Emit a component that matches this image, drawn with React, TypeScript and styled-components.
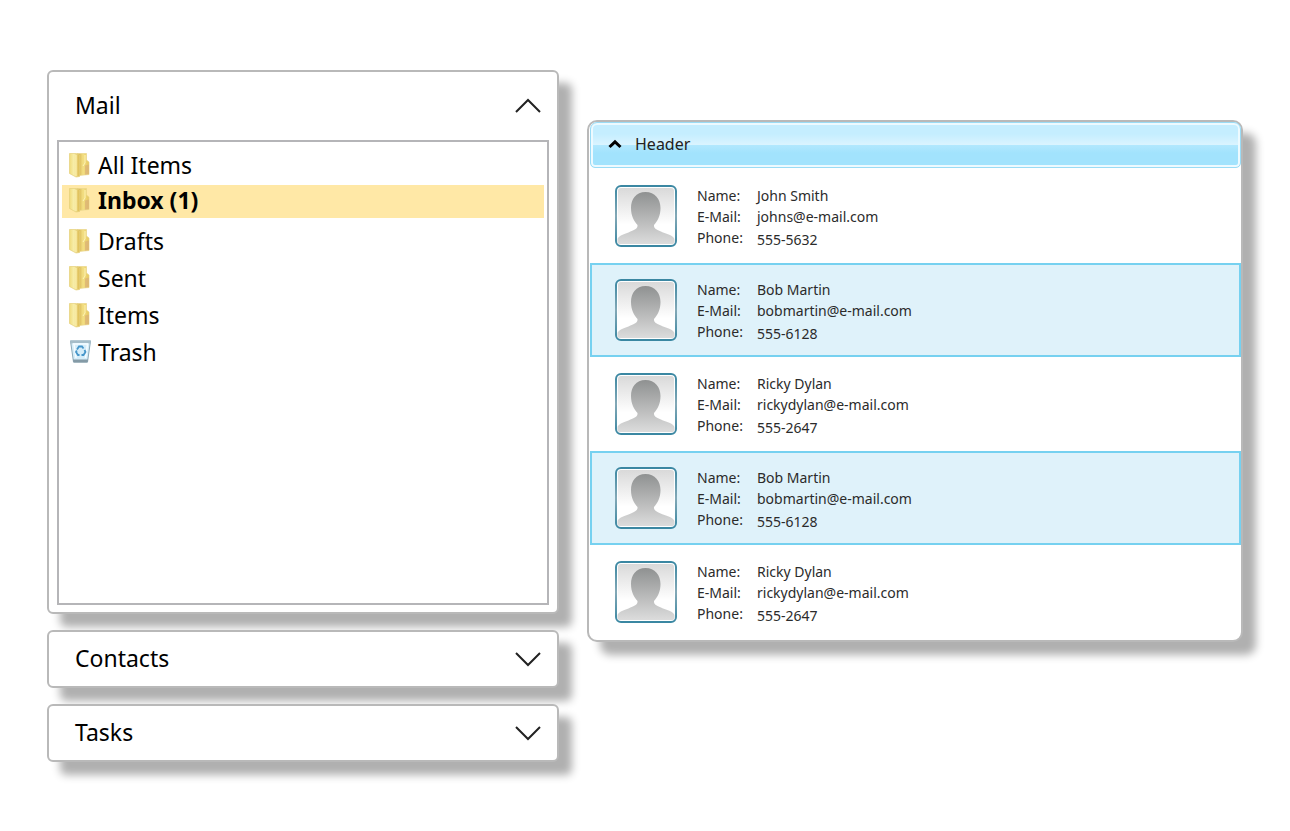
import React, { useState } from "react";
import styled, { createGlobalStyle } from "styled-components";

const GlobalStyle = createGlobalStyle`
  * { box-sizing: border-box; }
  body {
    margin: 0;
    background: #fff;
    color: #000;
    font-family: "Noto Sans", "Open Sans", sans-serif;
  }
  button { font: inherit; color: inherit; cursor: pointer; }
  ul, dl, dd { margin: 0; padding: 0; list-style: none; }
`;

const Page = styled.main`
  display: grid;
  grid-template-columns: 512fr 656fr;
  gap: 28px;
  align-items: start;
  padding: 70px 47px;
`;

const Accordion = styled.div`
  display: flex;
  flex-direction: column;
  gap: 16px;
`;

const Panel = styled.section`
  border: 2px solid #b9b9b9;
  border-radius: 6px;
  background: #fff;
  box-shadow: 13px 13px 8px #b0b0b0;
`;

const PanelButton = styled.button<{ $open: boolean }>`
  display: flex;
  align-items: center;
  justify-content: space-between;
  width: 100%;
  height: ${(p) => (p.$open ? 68 : 54)}px;
  padding: 0 16px 2px 26px;
  border: 0;
  background: none;
  font-size: 23px;
  line-height: 32px;

  svg { margin-top: 2px; }
`;

const FolderBox = styled.ul`
  height: 465px;
  margin: 0 8px 7px;
  padding: 4px 3px;
  border: 2px solid #b5b5b8;
`;

const FolderItem = styled.li<{ $active?: boolean }>`
  margin: ${(p) => (p.$active ? "2px 0 4px" : "0")};
  background: ${(p) => (p.$active ? "#ffe8a6" : "transparent")};
`;

const FolderLink = styled.a<{ $active?: boolean }>`
  display: flex;
  align-items: center;
  gap: 6px;
  height: ${(p) => (p.$active ? 33 : 37)}px;
  padding: ${(p) => (p.$active ? "0 6px 3px" : "0 6px")};
  color: #000;
  font-size: 23px;
  font-weight: ${(p) => (p.$active ? 700 : 400)};
  line-height: 32px;
  text-decoration: none;
`;

const ContactPanel = styled.section`
  margin-top: 50px;
  padding: 0 0 1px 1px;
  border: 2px solid #b9b9b9;
  border-radius: 10px;
  background: #fff;
  box-shadow: 13px 13px 8px #b0b0b0;
`;

const ContactHeader = styled.button`
  display: flex;
  align-items: center;
  gap: 12px;
  width: 100%;
  height: 46px;
  margin-bottom: 1px;
  padding: 0 16px 2px;
  border: 1px solid #9adcf6;
  border-radius: 7px 7px 5px 5px;
  background: linear-gradient(#c5eeff 0%, #c5eeff 25%, #daf4ff 49%, #b2e8fe 50%, #a2e3fd 68%, #a2e3fd 100%);
  box-shadow: inset 0 0 0 2px #edfaff;
  color: #222;
  font-size: 16px;
  line-height: 24px;
`;

const ContactCard = styled.li<{ $selected: boolean }>`
  display: flex;
  align-items: center;
  gap: 20px;
  height: 94px;
  padding: 0 23px;
  border: 2px solid ${(p) => (p.$selected ? "#76d1f0" : "transparent")};
  background: ${(p) => (p.$selected ? "#dff2fa" : "transparent")};
`;

const Details = styled.dl`
  display: grid;
  grid-template-columns: 46px auto;
  column-gap: 14px;
  padding-top: 3px;
  color: #2b2b2b;
  font-size: 14px;
  line-height: 21px;
`;

const Term = styled.dt`
  white-space: nowrap;
`;

const Value = styled.dd`
  white-space: nowrap;
`;

const PhoneValue = styled(Value)`
  padding-top: 2px;
`;

function Chevron({ up }: { up?: boolean }) {
  return (
    <svg width="26" height="16" viewBox="0 0 26 16" fill="none" stroke="#222" strokeWidth="2">
      <path d={up ? "M1 14 13 2l12 12" : "M1 2l12 12L25 2"} />
    </svg>
  );
}

function FolderIcon() {
  return (
    <svg width="24" height="26" viewBox="0 0 24 26">
      <defs>
        <linearGradient id="cover" x1="0" x2="1">
          <stop offset="0" stopColor="#f0dc7c" />
          <stop offset=".45" stopColor="#f8efac" />
          <stop offset="1" stopColor="#dcb94d" />
        </linearGradient>
        <linearGradient id="back" x1="0" x2="1">
          <stop offset="0" stopColor="#cda744" />
          <stop offset=".5" stopColor="#f3df83" />
          <stop offset="1" stopColor="#e6c75f" />
        </linearGradient>
      </defs>
      <path d="M9 1.500h9.500v6.500l2.500 2v12.500l-10 1z" fill="url(#back)" stroke="#ead58a" strokeWidth=".7" />
      <path d="M17 13.500l4-1v9.500l-4 .8z" fill="#d9ad78" opacity=".65" />
      <path d="M17 3v8l-2 3" stroke="#fff5b8" fill="none" />
      <path d="M1.500 1.500l6.500 0 3.500 1.500v21.500l-3.500.5-6.500-3.500z" fill="url(#cover)" stroke="#e5d07a" strokeWidth=".7" />
      <path d="M8 3v21" stroke="#fff4b4" strokeWidth="1" />
    </svg>
  );
}

function TrashIcon() {
  return (
    <svg width="24" height="26" viewBox="0 0 24 26">
      <path d="M2.500 2h20l-3 21h-14z" fill="#d5edf9" stroke="#8ba9b8" />
      <path d="M2 1.500h21l-.5 3H2.500z" fill="#a5bdc9" />
      <path d="M4.500 4h16l-.5 2H5z" fill="#edf9ff" />
      <path d="M5 20.500h15l-.5 3h-14z" fill="#849aa6" />
      <path d="M6 5l2 14M19.500 5l-2 14" stroke="#f6fcff" strokeWidth="1.500" />
      <g fill="none" stroke="#4696ca" strokeWidth="1.800">
        <path d="M9 10.500l2-3h3l1.500 2" />
        <path d="M16.500 11l1 2-2 3h-2" />
        <path d="M11.500 16H10l-2-3 .8-1.500" />
      </g>
    </svg>
  );
}

function Avatar() {
  return (
    <svg width="62" height="62" viewBox="0 0 62 62">
      <defs>
        <linearGradient id="frame" x1="0" y1="0" x2="0" y2="1">
          <stop offset="0" stopColor="#d9d9d9" />
          <stop offset=".65" stopColor="#fff" />
        </linearGradient>
        <linearGradient id="person" x1="0" y1="0" x2="0" y2="1">
          <stop offset="0" stopColor="#8f9191" />
          <stop offset="1" stopColor="#dcdcdc" />
        </linearGradient>
        <linearGradient id="rim" x1="0" y1="0" x2="0" y2="1">
          <stop offset="0" stopColor="#3a87a2" />
          <stop offset=".5" stopColor="#83a8b6" />
          <stop offset="1" stopColor="#3a87a2" />
        </linearGradient>
      </defs>
      <rect x="1" y="1" width="60" height="60" rx="5" fill="#fff" stroke="url(#rim)" strokeWidth="2" />
      <rect x="3" y="3" width="56" height="56" rx="3" fill="url(#frame)" />
      <path
        d="M30.500 7C21 7 16 14 16 23c0 8 3 13 6.500 17 .5 4-3.500 5-9 7.500C8 49.500 2.500 51 2.500 55v2a2 2 0 0 0 2 2h53a2 2 0 0 0 2-2v-2c0-4-5.500-5.500-11.500-7.500-5.500-2.500-9.500-3.500-9-7.500C42.500 36 45.500 31 45.500 23c0-9-5.500-16-15-16z"
        fill="url(#person)"
      />
    </svg>
  );
}

const folders = ["All Items", "Inbox (1)", "Drafts", "Sent", "Items", "Trash"];

const john = { name: "John Smith", email: "johns@e-mail.com", phone: "555-5632" };
const bob = { name: "Bob Martin", email: "bobmartin@e-mail.com", phone: "555-6128" };
const ricky = { name: "Ricky Dylan", email: "rickydylan@e-mail.com", phone: "555-2647" };
const contacts = [john, bob, ricky, bob, ricky];

export default function App() {
  const [open, setOpen] = useState("Mail");
  const [expanded, setExpanded] = useState(true);

  return (
    <>
      <GlobalStyle />
      <Page>
        <Accordion>
          {["Mail", "Contacts", "Tasks"].map((title) => {
            const isOpen = open === title;
            return (
              <Panel key={title}>
                <PanelButton $open={isOpen} aria-expanded={isOpen} onClick={() => setOpen(isOpen ? "" : title)}>
                  {title}
                  <Chevron up={isOpen} />
                </PanelButton>
                {isOpen && title === "Mail" && (
                  <FolderBox>
                    {folders.map((folder) => {
                      const active = folder.startsWith("Inbox");
                      return (
                        <FolderItem key={folder} $active={active}>
                          <FolderLink href="#" $active={active}>
                            {folder === "Trash" ? <TrashIcon /> : <FolderIcon />}
                            {folder}
                          </FolderLink>
                        </FolderItem>
                      );
                    })}
                  </FolderBox>
                )}
              </Panel>
            );
          })}
        </Accordion>

        <ContactPanel>
          <ContactHeader aria-expanded={expanded} onClick={() => setExpanded(!expanded)}>
            <svg width="16" height="12" viewBox="0 0 16 12" fill="none" stroke="#000" strokeWidth="3">
              <path d="M2.500 9 8 3.800 13.500 9" />
            </svg>
            Header
          </ContactHeader>
          {expanded && (
            <ul>
              {contacts.map((contact, i) => (
                <ContactCard key={i} $selected={i % 2 === 1}>
                  <Avatar />
                  <Details>
                    <Term>Name:</Term>
                    <Value>{contact.name}</Value>
                    <Term>E-Mail:</Term>
                    <Value>{contact.email}</Value>
                    <Term>Phone:</Term>
                    <PhoneValue>{contact.phone}</PhoneValue>
                  </Details>
                </ContactCard>
              ))}
            </ul>
          )}
        </ContactPanel>
      </Page>
    </>
  );
}
